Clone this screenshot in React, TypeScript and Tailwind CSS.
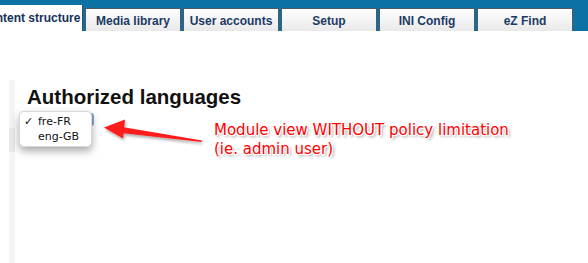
import React from 'react';

const tabs = ['Media library', 'User accounts', 'Setup', 'INI Config', 'eZ Find'];

const App: React.FC = () => {
  return (
    <div className="relative w-[588px] h-[263px] overflow-hidden bg-white font-['Liberation_Sans',Arial,sans-serif]">
      {/* top navigation */}
      <div className="flex h-[31px] items-end gap-[2px] bg-[#0b72a3]">
        <div className="-ml-[22px] flex h-[26px] w-[105px] items-start justify-center border-r border-[#3d4f5e] bg-white pt-[4px] text-[12px] font-bold text-[#15325a]">
          Content structure
        </div>
        {tabs.map((tab) => (
          <div
            key={tab}
            className="flex h-[23px] w-[96px] items-start justify-center border border-b-0 border-[#4d5a66] bg-gradient-to-b from-[#ffffff] to-[#e9e9e9] pt-[3px] text-[12px] font-bold text-[#1c3a66]"
          >
            {tab}
          </div>
        ))}
      </div>

      {/* page body */}
      <div className="flex">
        <div className="ml-[9px] mt-[49px] flex h-[183px] w-[6px] flex-col bg-[#f4f4f4]">
          <div className="mt-[48px] h-[24px] bg-[#e9e9e9]" />
        </div>
        <div className="ml-[12px] mt-[54px]">
          <h1 className="text-[20.5px] font-bold leading-[24px] text-[#111]">Authorized languages</h1>
        </div>
      </div>

      {/* select popup */}
      <div className="absolute left-[86px] top-[113px] h-[13px] w-[8px] rounded-r-[3px] bg-[#7ea9dc]" />
      <div className="absolute left-[19px] top-[111px] w-[73px] rounded-[5px] border border-[#d8d8d8] bg-white py-[2px] font-['DejaVu_Sans',sans-serif] text-[11px] leading-[15px] text-[#111] shadow-[0_4px_9px_rgba(0,0,0,0.35)]">
        <div className="flex">
          <span className="w-[18px] pl-[4px]">✓</span>
          <span>fre-FR</span>
        </div>
        <div className="flex">
          <span className="w-[18px]" />
          <span>eng-GB</span>
        </div>
      </div>

      {/* arrow */}
      <svg className="absolute left-0 top-0" width="588" height="263" viewBox="0 0 588 263">
        <defs>
          <filter id="sh" x="-20%" y="-50%" width="140%" height="200%">
            <feDropShadow dx="1" dy="2" stdDeviation="1.5" floodColor="#000" floodOpacity="0.35" />
          </filter>
        </defs>
        <g filter="url(#sh)">
          <polygon points="104,127.5 125,119.5 123,138.5" fill="#ff1a1a" />
          <polygon points="122,127 202,140.5 201.5,142 121.5,133" fill="#ff1a1a" />
        </g>
      </svg>

      {/* annotation */}
      <div className="absolute left-[214px] top-[121px] font-['DejaVu_Sans',Verdana,sans-serif] text-[15px] leading-[19px] text-[#ff0000] [text-shadow:0_0_1px_#fff,0_0_2px_#fff,1px_1px_0_#fff,-1px_-1px_0_#fff,1px_-1px_0_#fff,-1px_1px_0_#fff,2px_2px_3px_rgba(0,0,0,0.45)]">
        <div>Module view WITHOUT policy limitation</div>
        <div>(ie. admin user)</div>
      </div>
    </div>
  );
};

export default App;
